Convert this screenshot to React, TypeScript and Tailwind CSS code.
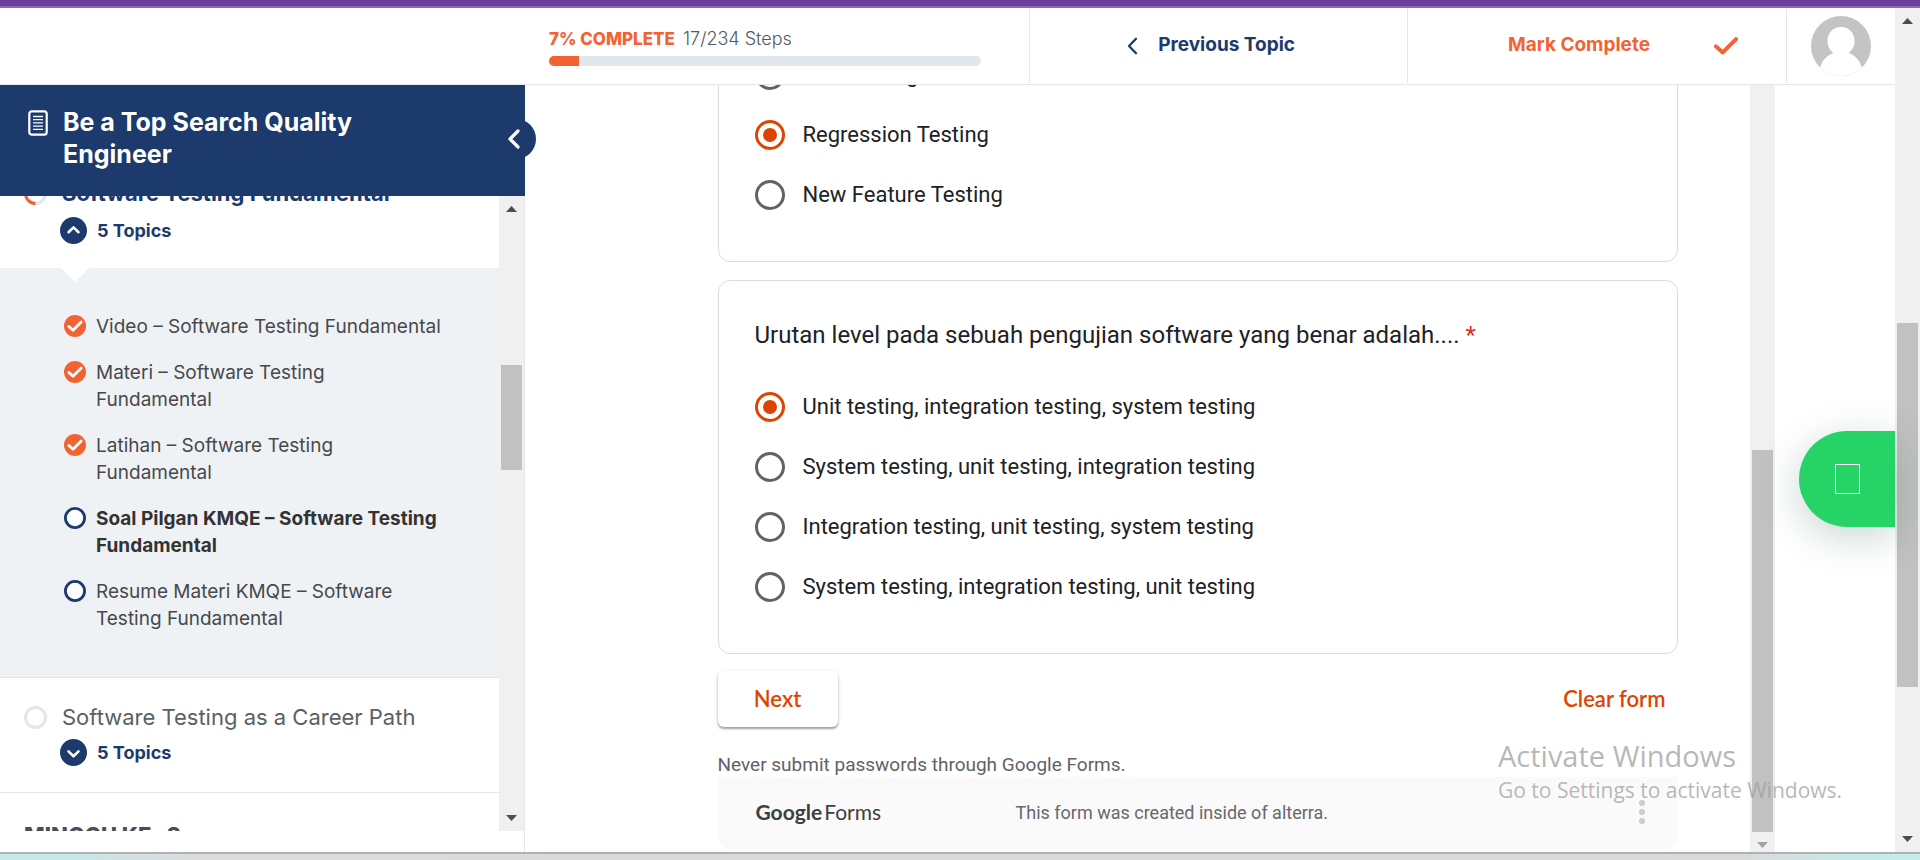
import React, { useState } from "react";

type Topic = { title: string; done: boolean; current?: boolean };

const topics: Topic[] = [
  { title: "Video – Software Testing Fundamental", done: true },
  { title: "Materi – Software Testing\nFundamental", done: true },
  { title: "Latihan – Software Testing\nFundamental", done: true },
  { title: "Soal Pilgan KMQE – Software Testing\nFundamental", done: false, current: true },
  { title: "Resume Materi KMQE – Software\nTesting Fundamental", done: false },
];

const testTypes = ["Unit Testing", "Regression Testing", "New Feature Testing"];

const testLevels = [
  "Unit testing, integration testing, system testing",
  "System testing, unit testing, integration testing",
  "Integration testing, unit testing, system testing",
  "System testing, integration testing, unit testing",
];

type ScrollbarProps = { before: number; thumb: number; after: number; disabled?: boolean };

function Scrollbar({ before, thumb, after, disabled = false }: ScrollbarProps) {
  return (
    <div aria-hidden="true" className="flex w-[25px] shrink-0 flex-col items-center bg-[#f0f0f0]">
      <svg width="25" height="26" viewBox="0 0 25 26" className="shrink-0">
        <path d="M7 16L12.5 10L18 16Z" fill={disabled ? "#f0f0f0" : "#4d4d4d"} />
      </svg>
      <div className="min-h-0 basis-0" style={{ flexGrow: before }} />
      <div className="min-h-0 w-[21px] basis-0 bg-[#c1c1c1]" style={{ flexGrow: thumb }} />
      <div className="min-h-0 basis-0" style={{ flexGrow: after }} />
      <svg width="25" height="20" viewBox="0 0 25 20" className="shrink-0">
        <path d={disabled ? "M7 10H18L12.5 16Z" : "M7 4H18L12.5 10Z"} fill={disabled ? "#a3a3a3" : "#4d4d4d"} />
      </svg>
    </div>
  );
}

function TopicIcon({ done }: { done: boolean }) {
  return (
    <svg width="22" height="22" viewBox="0 0 22 22" className="mt-0.5 shrink-0" aria-hidden="true">
      {done ? (
        <>
          <circle cx="11" cy="11" r="11" fill="#f26334" />
          <path d="M4.8 11.4L9 15.2L17.2 7" fill="none" stroke="#fff" strokeWidth="2.8" strokeLinecap="round" strokeLinejoin="round" />
        </>
      ) : (
        <circle cx="11" cy="11" r="9.6" fill="#fff" stroke="#1c3a6b" strokeWidth="2.8" />
      )}
    </svg>
  );
}

function TopicsToggle({ open }: { open: boolean }) {
  return (
    <button type="button" aria-expanded={open} className="ml-[60px] flex items-center gap-2.5 text-[18px] leading-[27px] font-bold text-[#1c3a6b]">
      <svg width="27" height="27" viewBox="0 0 27 27" aria-hidden="true">
        <circle cx="13.5" cy="13.5" r="13.5" fill="#1c3a6b" />
        <path d={open ? "M8.5 15.2L13.5 10.4L18.5 15.2" : "M8.5 12.4L13.5 17.2L18.5 12.4"} fill="none" stroke="#fff" strokeWidth="2.6" strokeLinecap="round" strokeLinejoin="round" />
      </svg>
      5 Topics
    </button>
  );
}

type QuestionProps = { name: string; options: string[]; selected: number; onSelect: (i: number) => void };

function Options({ name, options, selected, onSelect }: QuestionProps) {
  return (
    <div className="flex flex-col gap-[30px]">
      {options.map((text, i) => (
        <label key={text} className="flex items-center gap-[18px] text-[22px] leading-[30px]">
          <input
            type="radio"
            name={name}
            checked={selected === i}
            onChange={() => onSelect(i)}
            className="size-[30px] shrink-0 appearance-none rounded-full border-3 border-[#5f6368] p-[5px] checked:border-[#dd4400] checked:bg-[#dd4400] checked:bg-clip-content"
          />
          {text}
        </label>
      ))}
    </div>
  );
}

function Header() {
  return (
    <header className="flex h-[77px] shrink-0 border-b border-[#e2e7ed] bg-white pb-px">
      <div className="w-[525px] shrink-0" />
      <div className="grid min-w-0 flex-1 grid-cols-[4fr_3fr_3fr]">
        <div className="border-r border-[#e4e6ea] pt-[19px] pr-12 pl-6">
          <p className="flex gap-2 text-[18px] leading-6 whitespace-nowrap">
            <span className="text-[17px] font-extrabold text-[#f26334]">7% COMPLETE</span>
            <span className="font-light text-[#545863]">17/234 Steps</span>
          </p>
          <div role="progressbar" aria-label="Course progress" aria-valuenow={7} aria-valuemin={0} aria-valuemax={100} className="mt-[5px] h-2.5 overflow-hidden rounded-full bg-[#e2e6ed]">
            <div className="h-full bg-[#f26334]" style={{ width: "7%" }} />
          </div>
        </div>
        <a href="#previous" className="flex items-center justify-center gap-5 border-r border-[#e4e6ea] pr-4 text-[19px] font-bold whitespace-nowrap text-[#1c3a6b]">
          <svg width="12" height="18" viewBox="0 0 12 18" aria-hidden="true">
            <path d="M10 1.8L3 9L10 16.2" fill="none" stroke="currentColor" strokeWidth="2.3" strokeLinecap="round" strokeLinejoin="round" />
          </svg>
          Previous Topic
        </a>
        <button type="button" className="flex items-center justify-end gap-16 border-r border-[#e4e6ea] pr-12 text-[19px] font-bold whitespace-nowrap text-[#f26334]">
          Mark Complete
          <svg width="24" height="18" viewBox="0 0 24 18" aria-hidden="true">
            <path d="M2 9.4L8.8 15.4L22 2.2" fill="none" stroke="currentColor" strokeWidth="4" strokeLinecap="round" strokeLinejoin="round" />
          </svg>
        </button>
      </div>
      <div className="flex w-[108px] shrink-0 justify-center pt-2">
        <svg width="60" height="60" viewBox="0 0 60 60" role="img" aria-label="Profile">
          <clipPath id="avatar-clip">
            <circle cx="30" cy="30" r="30" />
          </clipPath>
          <g clipPath="url(#avatar-clip)">
            <rect width="60" height="60" fill="#c4c4c4" />
            <path d="M30 11C22 11 16.5 17 16.5 25C16.5 30 19 34.5 22.5 37C16 39 11 44.5 9 52L7 60H53L51 52C49 44.5 44 39 37.5 37C41 34.5 43.5 30 43.5 25C43.5 17 38 11 30 11Z" fill="#fff" />
          </g>
        </svg>
      </div>
    </header>
  );
}

function Sidebar() {
  return (
    <aside className="flex w-[525px] shrink-0 flex-col border-r border-[#e4e6ea] bg-white pb-[21px]">
      <div className="relative -mr-px flex h-[111px] shrink-0 gap-[15px] bg-[#1c3a6b] pt-[21px] pl-7 text-white">
        <svg width="20" height="26" viewBox="0 0 20 26" className="mt-1 shrink-0" aria-hidden="true">
          <rect x="1.3" y="1.3" width="17.4" height="23.4" rx="2.5" fill="none" stroke="#fff" strokeWidth="2.2" />
          <path d="M5 6.5H15M5 9.7H15M5 12.9H15M5 16.1H15M5 19.3H15" stroke="#fff" strokeWidth="1.3" />
        </svg>
        <h1 className="w-[320px] text-[25px] leading-8 font-bold">Be a Top Search Quality Engineer</h1>
        <button type="button" aria-label="Collapse sidebar" className="absolute top-[34px] -right-[11px] flex size-10 items-center justify-center rounded-full bg-[#1c3a6b] pr-1">
          <svg width="14" height="20" viewBox="0 0 14 20" aria-hidden="true">
            <path d="M11 2L3 10L11 18" fill="none" stroke="#fff" strokeWidth="3.2" strokeLinecap="round" strokeLinejoin="round" />
          </svg>
        </button>
      </div>
      <div className="flex min-h-0 flex-1">
        <nav aria-label="Course content" className="min-w-0 flex-1 overflow-hidden">
          <div className="-mt-[18px] h-[90px]">
            <a href="#fundamental" className="mb-2 flex gap-[15px] pl-6 text-[22px] leading-[31px] font-bold whitespace-nowrap text-[#1c3a6b]">
              <svg width="23" height="23" viewBox="0 0 23 23" className="mt-1 shrink-0" aria-hidden="true">
                <circle cx="11.5" cy="11.5" r="10" fill="none" stroke="#e2e6ed" strokeWidth="3" />
                <path d="M11.5 21.5A10 10 0 0 1 11.5 1.5" fill="none" stroke="#f26334" strokeWidth="3" />
              </svg>
              Software Testing Fundamental
            </a>
            <TopicsToggle open />
          </div>
          <div className="h-[410px] border-b border-[#e2e6ed] bg-[#eff2f5]">
            <svg width="28" height="14" viewBox="0 0 28 14" className="ml-[61px]" aria-hidden="true">
              <path d="M0 0H28L14 14Z" fill="#fff" />
            </svg>
            <ul className="mt-[31px] flex flex-col gap-[19px] pl-16 text-[19px] leading-[27px] text-[#48484b]">
              {topics.map((t) => (
                <li key={t.title}>
                  <a href="#topic" aria-current={t.current ? "page" : undefined} className={t.current ? "flex gap-2.5 font-bold text-[#333]" : "flex gap-2.5"}>
                    <TopicIcon done={t.done} />
                    <span className="whitespace-pre-line">{t.title}</span>
                  </a>
                </li>
              ))}
            </ul>
          </div>
          <div className="h-[115px] border-b border-[#e2e6ed] pt-6">
            <a href="#career" className="mb-1.5 flex gap-[15px] pl-6 text-[22px] leading-[31px] whitespace-nowrap text-[#596164]">
              <svg width="23" height="23" viewBox="0 0 23 23" className="mt-1 shrink-0" aria-hidden="true">
                <circle cx="11.5" cy="11.5" r="10" fill="none" stroke="#e2e6ed" strokeWidth="3" />
              </svg>
              Software Testing as a Career Path
            </a>
            <TopicsToggle open={false} />
          </div>
          <h2 className="pt-[26px] pl-6 text-[22px] leading-8 font-extrabold text-[#4a4d58]">MINGGU KE- 2</h2>
        </nav>
        <Scrollbar before={143} thumb={105} after={341} />
      </div>
    </aside>
  );
}

function GoogleForm() {
  const [type, setType] = useState(1);
  const [level, setLevel] = useState(0);
  return (
    <div className="flex min-w-0 flex-1">
      <form className="flex min-h-0 min-w-0 flex-1 flex-col items-center justify-end overflow-hidden font-[Roboto,sans-serif] text-[#202124]">
        <div className="w-full max-w-[960px] shrink-0">
          <fieldset className="rounded-xl border border-[#dadce0] px-9 pb-[51px]">
            <legend className="sr-only">Jenis pengujian</legend>
            <Options name="type" options={testTypes} selected={type} onSelect={setType} />
          </fieldset>
          <fieldset className="mt-[18px] rounded-xl border border-[#dadce0] px-9 pt-9 pb-[51px]" aria-labelledby="level-question">
            <p id="level-question" className="mb-[39px] text-[24px] leading-9">
              Urutan level pada sebuah pengujian software yang benar adalah.... <span className="text-[#d93025]">*</span>
            </p>
            <Options name="level" options={testLevels} selected={level} onSelect={setLevel} />
          </fieldset>
          <div className="mt-[17px] flex justify-between font-[Lato,sans-serif] text-[22px] leading-[30px] font-semibold text-[#dd4400]">
            <button type="button" className="h-14 w-[120px] rounded-md bg-white shadow-[0_2px_2px_rgba(0,0,0,0.3),0_1px_4px_rgba(0,0,0,0.15)]">Next</button>
            <button type="button" className="px-3">Clear form</button>
          </div>
          <p className="mt-[25px] text-[19px] leading-[25px] text-[#5f6368]">Never submit passwords through Google Forms.</p>
          <footer className="mb-[3px] flex h-[72px] items-center rounded-b-xl bg-[#fafafa] pr-8 pb-0.5 pl-[38px] text-[18px] text-[#66686b]">
            <p className="flex w-[260px] items-baseline gap-0.5 font-[Lato,sans-serif] text-[21px] text-[#3c4043]">
              <span className="font-bold">Google</span>
              <span>Forms</span>
            </p>
            <p className="flex-1">This form was created inside of alterra.</p>
            <button type="button" aria-label="More options">
              <svg width="8" height="26" viewBox="0 0 8 26" fill="#cdcdcd" aria-hidden="true">
                <circle cx="4" cy="4" r="3" />
                <circle cx="4" cy="13" r="3" />
                <circle cx="4" cy="22" r="3" />
              </svg>
            </button>
          </footer>
        </div>
      </form>
      <Scrollbar before={339} thumb={383} after={0} disabled />
    </div>
  );
}

export default function App() {
  return (
    <div className="relative flex h-screen flex-col overflow-hidden bg-white font-[Inter,sans-serif]">
      <div className="h-2 shrink-0 border-b-2 border-[#8f69b8] bg-[#6c3f9e]" />
      <div className="flex min-h-0 flex-1">
        <div className="flex min-w-0 flex-1 flex-col">
          <Header />
          <div className="flex min-h-0 flex-1">
            <Sidebar />
            <main className="flex min-w-0 flex-1 px-[120px]">
              <GoogleForm />
            </main>
          </div>
        </div>
        <div className="relative flex">
          <button type="button" aria-label="WhatsApp" className="absolute top-[423px] right-[25px] flex h-24 w-24 items-center justify-center rounded-l-full bg-[#26d367] shadow-[0_10px_40px_rgba(0,70,60,0.22)]">
            <span className="h-[30px] w-[25px] border border-white" />
          </button>
          <Scrollbar before={289} thumb={364} after={145} />
        </div>
      </div>
      <div className="h-2 shrink-0 border-t-2 border-[#aeb2b1] bg-[linear-gradient(to_right,#c6e7ea_3%,#dadcdc_10%,#d9dbdb_91%,#c4eaec_98%)]" />
      <div className="pointer-events-none absolute right-[79px] bottom-[54px] w-[343px] font-[Open_Sans,sans-serif] whitespace-nowrap text-[#a0a0a0]/75">
        <p className="text-[29px] leading-9">Activate Windows</p>
        <p className="text-[21px] leading-8">Go to Settings to activate Windows.</p>
      </div>
    </div>
  );
}
